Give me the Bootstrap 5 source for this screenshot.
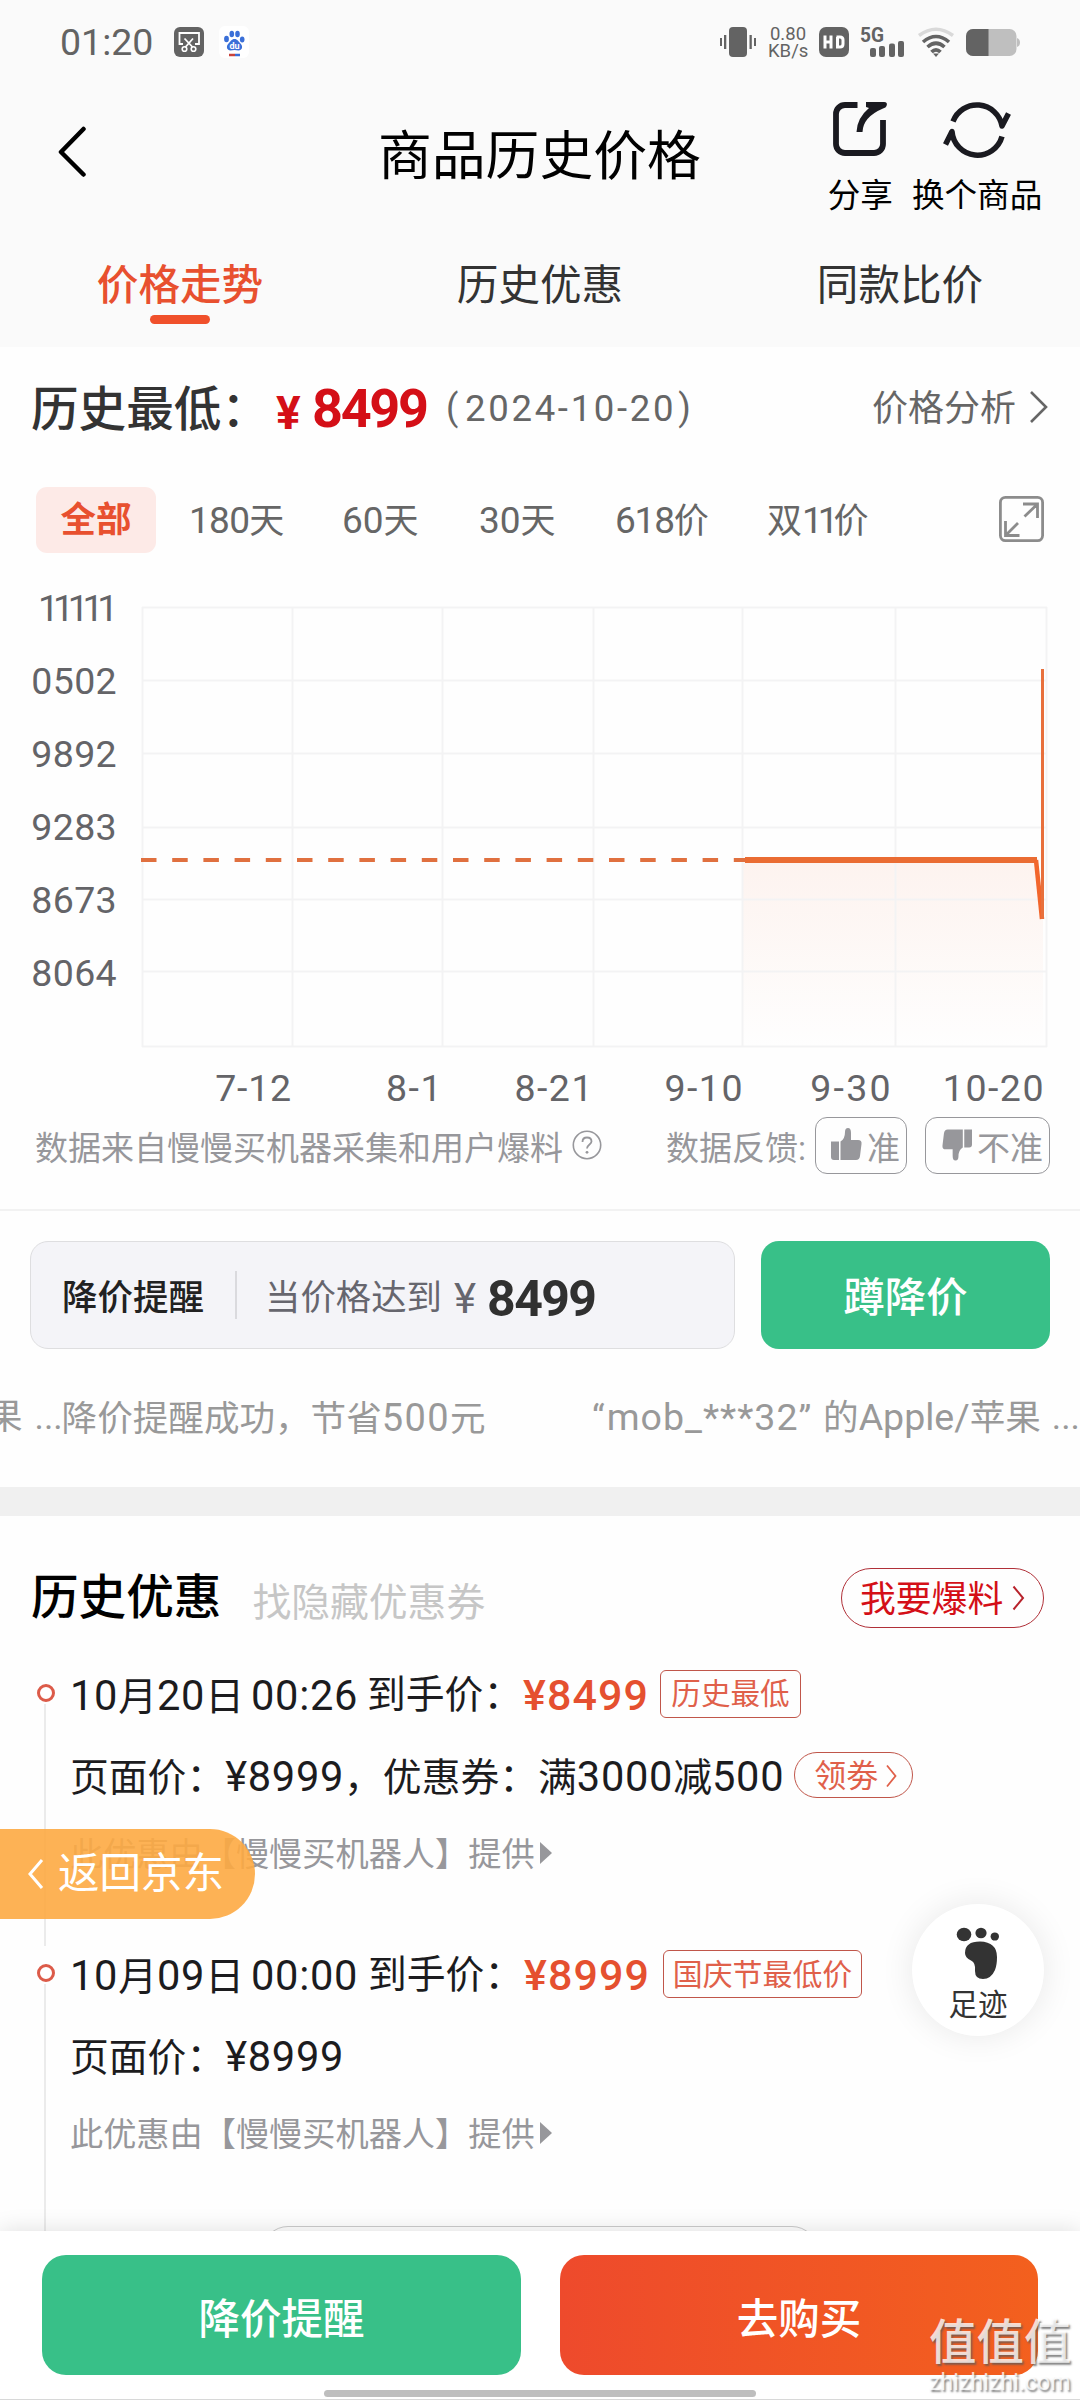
<!DOCTYPE html>
<html lang="zh-CN">
<head>
<meta charset="utf-8">
<meta name="viewport" content="width=device-width, initial-scale=1">
<title>商品历史价格</title>
<link href="https://cdn.jsdelivr.net/npm/bootstrap@5.3.0/dist/css/bootstrap.min.css" rel="stylesheet">
<style>
  body{font-family:Roboto,"Noto Sans CJK SC",sans-serif;background:#fefefe;color:#1c1c1e;line-height:1}
  .screen{width:1080px;height:2400px}
  .screen svg{display:block;flex:none}
  .screen span{white-space:nowrap}
  a{white-space:nowrap;text-decoration:none;color:inherit}
  .top-area{background:#fafafa;height:347px}
  .status{height:84px;padding:0 60px 0 60px;color:#636363}
  .clock{font-size:37.5px;padding-top:2px}
  .rate{font-size:18.5px;line-height:17.5px;width:40px;padding-top:2px}
  .head-row{height:144px}
  .head-title{font-size:53.8px;color:#000}
  .act-label{font-size:32.6px;color:#000;margin-top:22px}
  .tabs-row{height:119px;font-size:41.6px;color:#333}
  .tabs-row .tab-cell{width:360px;padding-top:37px}
  .tab-on{color:#e8502f;font-weight:500}
  .tab-bar{width:60px;height:9px;border-radius:5px;background:#f0502b;margin-top:8px}
  .low-row{height:121px;padding:3px 31px 0}
  .low-label{font-size:47.6px;font-weight:500;color:#333;padding-top:3px}
  .red{color:#d40f17}
  .grey{color:#666}
  .filters{height:104px;padding:0 36px;font-size:35px}
  .filters .num{font-size:37px}
  .tight{letter-spacing:-5px}
  .chip-on{width:120px;height:66px;padding-top:2px;border-radius:11px;background:#fdeae7;color:#e8502f;font-weight:700;font-size:35.5px}
  .src-row{height:66px;padding:0 30px 0 35px;font-size:33px;color:#97979b}
  .src-row .nudge{padding-top:6px}
  .vote{height:57px;border:1.5px solid #97979b;border-radius:12px}
  .rule{height:2px;background:#f2f2f2;margin-top:31px}
  .remind{padding:30px 30px 0}
  .remind-box{width:705px;height:108px;border:1.5px solid #dedee0;border-radius:18px;background:#f4f4f8;font-size:35.5px}
  .remind-box .nudge{padding-top:7px}
  .squat{width:289px;height:108px;padding-top:7px;border-radius:18px;background:#38c088;color:#fff;font-size:41.3px;font-weight:500}
  .marquee-row{height:138px;font-size:35.6px;color:#999;overflow:hidden}
  .band{height:29px;background:#f0f0f0}
  .hist-head{height:138px;padding:25px 36px 0 31px}
  .deal{height:280px;padding-left:70px;font-size:38.8px}
  .deal .num{font-size:41.6px;letter-spacing:.7px}
  .deal .hot{color:#e5502f;font-weight:500;font-size:43px;letter-spacing:1.1px}
  .deal .r1,.deal .r2,.deal .r3{padding-top:3px}
  .deal .r1{height:80px}.deal .r2{height:82px}.deal .r3{height:74px;font-size:33.2px;color:#97979b}
  .tagbox{border:1.5px solid #c0564a;border-radius:6px;height:48px;padding-top:2px;margin-top:-4px;color:#e0604a}
  .pill{border:1.5px solid #b03038;border-radius:40px;padding-top:6px}
  .track{left:0;top:1654px}
  .back-jd{left:0;top:1829px;width:255px;height:90px;border-radius:0 45px 45px 0;background:rgba(253,170,66,.9);font-size:41.5px}
  .foot-btn{left:912px;top:1904px;width:132px;height:132px;border-radius:50%;background:#fff;box-shadow:0 0 34px rgba(0,0,0,.09);font-size:29.5px;color:#333}
  .peek{left:262px;top:2226px;width:556px;height:60px;border:1.5px solid #ccc;border-radius:26px}
  .dock{left:0;top:2231px;width:1080px;height:169px;background:#fff;box-shadow:0 0 22px rgba(0,0,0,.13);padding:24px 42px 0;border-bottom:1px solid #d8d8d8}
  .dock .cta{height:120px;padding-top:9px;border-radius:24px;font-size:41.5px;font-weight:500}
  .cta-green{width:479px;background:#38c088}
  .cta-red{width:478px;background:linear-gradient(90deg,#ee4a2c,#f3601e)}
  .home-bar{left:324px;top:2390px;width:432px;height:7px;border-radius:4px;background:#bebebe}
  .wmark{left:929px;top:2320px;color:rgba(255,255,255,.78);text-shadow:1.5px 1.5px 2px rgba(90,90,90,.75)}
  .wmark .wm-a{font-size:47.5px;font-weight:500}
  .wmark .wm-b{font-size:23px;letter-spacing:.1px;margin-top:3px}
</style>
</head>
<body>
<div class="screen position-relative overflow-hidden">

  <header class="top-area">
    <div class="status d-flex align-items-center">
      <span class="clock">01:20</span>
      <svg style="margin-left:21px" width="30" height="30" viewBox="0 0 30 30"><rect width="30" height="30" rx="6" fill="#636363"/><path d="M9 17H5.500V6H25V17H21" fill="none" stroke="#fff" stroke-width="1.800"/><path d="M10.500 11.500 18.500 20M19 11.500 11.500 20" stroke="#fff" stroke-width="1.800"/><circle cx="10.500" cy="22" r="2.300" fill="none" stroke="#fff" stroke-width="1.600"/><circle cx="19.500" cy="22" r="2.300" fill="none" stroke="#fff" stroke-width="1.600"/></svg>
      <svg style="margin-left:15px" width="30" height="32" viewBox="0 0 30 32"><rect width="30" height="32" rx="6" fill="#fff"/><g fill="#3a6fd8"><ellipse cx="7.500" cy="13" rx="2.400" ry="3.200"/><ellipse cx="12.800" cy="8" rx="2.300" ry="3.200"/><ellipse cx="18.500" cy="8" rx="2.300" ry="3.200"/><ellipse cx="23.200" cy="13.500" rx="2.300" ry="3"/><path d="M15.500 13c3 0 4 2.500 6 4.500 3 3 1.500 7-2 7-1.500 0-2.500-.4-4-.4s-2.500.4-4 .4c-3.500 0-5-4-2-7 2-2 3-4.500 6-4.500z"/></g><text x="10.500" y="22.500" font-size="9" font-weight="700" fill="#fff">du</text><path d="M10 29h6" stroke="#c8423c" stroke-width="2.500"/><path d="M16 29h5" stroke="#3a6fd8" stroke-width="2.500"/></svg>
      <svg class="ms-auto" width="36" height="30" viewBox="0 0 36 30" fill="#636363"><rect x="9" width="18" height="30" rx="4"/><path d="M0 11h2v8H0zM4 8h2.300v14H4zM29.500 8h2.300v14h-2.300zM34 11h2v8h-2z"/></svg>
      <span class="rate text-center" style="margin-left:12px">0.80<br>KB/s</span>
      <svg style="margin-left:11px" width="30" height="30" viewBox="0 0 30 30"><rect width="30" height="30" rx="7" fill="#636363"/><path d="M6 8.500V21.500M12 8.500V21.500M6 15H12M17.500 10H21Q24 10 24 13V17Q24 20 21 20H18.500V10" fill="none" stroke="#fff" stroke-width="3"/></svg>
      <svg style="margin-left:11px" width="46" height="32" viewBox="0 0 46 32" fill="#636363"><text x="0" y="16" font-size="20" font-weight="700" textLength="24" lengthAdjust="spacingAndGlyphs">5G</text><rect x="10" y="22" width="6" height="9" rx="2"/><rect x="19" y="20" width="6" height="11" rx="2"/><rect x="29" y="17.500" width="6" height="13.500" rx="2"/><rect x="38" y="15" width="6" height="16" rx="2"/></svg>
      <svg style="margin-left:11px" width="38" height="31" viewBox="0 0 38 31" fill="none" stroke-width="3.600"><path d="M2 8.500Q19-4 36 8.500" stroke="#d9d9d9"/><path d="M6 15Q19 4 32 15M10.500 20Q19 12.500 27.500 20M14.500 25Q19 20.500 23.500 25" stroke="#636363"/><path d="M16 26.500h6L19 30z" fill="#636363" stroke="none"/></svg>
      <svg style="margin-left:11px" width="54" height="27" viewBox="0 0 54 27"><rect width="50.500" height="27" rx="7" fill="#bfbfbf"/><path d="M7 0H22.500V27H7A7 7 0 0 1 0 20V7A7 7 0 0 1 7 0z" fill="#636363"/><path d="M51 9q3 1 3 4.500T51 18z" fill="#bfbfbf"/></svg>
    </div>

    <div class="head-row d-flex">
      <svg style="margin:42px 0 0 57px" width="30" height="52" viewBox="0 0 30 52"><path d="M26.500 3 4 26 26.500 48.500" fill="none" stroke="#000" stroke-width="4.500" stroke-linecap="round" stroke-linejoin="round"/></svg>
      <span class="head-title" style="margin:46px 0 0 291px">商品历史价格</span>
      <div class="d-flex flex-column align-items-center" style="margin:16px 0 0 127px">
        <svg width="58" height="58" viewBox="0 0 58 58"><path d="M26.500 5H14A9 9 0 0 0 5 14V44A9 9 0 0 0 14 53H43A9 9 0 0 0 52 44V20" fill="none" stroke="#1a1a20" stroke-width="5.800"/><path d="M35 2H53Q57 2 55.500 6 55 7.500 52 8.500 32 17 31.500 32H25.500Q26 18 38 8L35 7Z" fill="#1a1a20"/></svg>
        <a href="#" class="act-label">分享</a>
      </div>
      <div class="d-flex flex-column align-items-center" style="margin:16px 0 0 19px">
        <svg width="70" height="58" viewBox="0 0 70 58" fill="none" stroke="#1a1a20" stroke-width="5.500" stroke-linejoin="round"><path d="M11 21.500A25.500 25.500 0 0 1 60 26L66.500 13.500"/><path d="M60 36.500A25.500 25.500 0 0 1 10 31.500L3.500 44.500"/></svg>
        <a href="#" class="act-label">换个商品</a>
      </div>
    </div>

    <nav class="tabs-row d-flex">
      <div class="tab-cell d-flex flex-column align-items-center tab-on"><span>价格走势</span><div class="tab-bar"></div></div>
      <div class="tab-cell text-center"><span>历史优惠</span></div>
      <div class="tab-cell text-center"><span>同款比价</span></div>
    </nav>
  </header>

  <section>
    <div class="low-row d-flex align-items-center">
      <span class="low-label" style="width:245px">历史最低：</span>
      <span class="red fw-bold" style="font-size:46px;width:36px;padding-top:7px">¥</span>
      <span class="red fw-bold" style="font-size:54px;letter-spacing:-2.300px;width:134px">8499</span>
      <span class="grey" style="font-size:36px;width:19px;padding-bottom:2px">(</span>
      <span class="grey" style="font-size:36.500px;letter-spacing:2.700px">2024-10-20</span>
      <span class="grey" style="font-size:36px;padding-bottom:2px;margin-left:2px">)</span>
      <span class="grey ms-auto" style="font-size:36px">价格分析</span>
      <svg style="margin:-4px 0 0 13px" width="20" height="34" viewBox="0 0 20 34"><path d="M2 2 17 17 2 32" fill="none" stroke="#666" stroke-width="2.600"/></svg>
    </div>

    <div class="filters d-flex align-items-center grey">
      <span class="chip-on d-flex align-items-center justify-content-center">全部</span>
      <span style="margin-left:33px;width:153px"><span class="num" style="letter-spacing:-.7px">180</span>天</span>
      <span style="width:137px"><span class="num">60</span>天</span>
      <span style="width:136px"><span class="num">30</span>天</span>
      <span style="width:152px"><span class="num" style="letter-spacing:-1.200px">618</span>价</span>
      <span>双<span class="num tight">11</span>价</span>
      <svg class="ms-auto" style="margin-top:-3px" width="45" height="46" viewBox="0 0 45 46" fill="none" stroke="#8c8c8c" stroke-width="2.800"><rect x="1.400" y="1.400" width="42.200" height="43.200" rx="5"/><path d="M24 8H38.500V22M38 8.500 25.500 20.500M6.500 25V39.500H20.500M7 39 19 27"/></svg>
    </div>

    <svg width="1080" height="540" viewBox="0 572 1080 540">
      <defs><linearGradient id="fade" x1="0" y1="0" x2="0" y2="1"><stop offset="0" stop-color="#fdf3ef"/><stop offset="1" stop-color="#fefefe"/></linearGradient></defs>
      <path d="M743 860H1036L1043 919V1046H743z" fill="url(#fade)"/>
      <path d="M142 607.500H1047M142 680.500H1047M142 753.500H1047M142 827.500H1047M142 899.500H1047M142 971.500H1047M142 1046.500H1047M142.500 607V1047M292.500 607V1047M442.500 607V1047M593.500 607V1047M742.500 607V1047M895.500 607V1047M1046.500 607V1047" stroke="#f3f3f4" stroke-width="2" fill="none"/>
      <path d="M141 860H745" stroke="#e0703f" stroke-width="4" stroke-dasharray="15.500 15.700"/>
      <path d="M745 860H1037" stroke="#ea6c33" stroke-width="6"/>
      <path d="M1036 860 1042 919" stroke="#f2662c" stroke-width="4.500"/>
      <path d="M1042.500 919V669" stroke="#e8703c" stroke-width="3"/>
      <g font-size="37.500" fill="#646468" text-anchor="end" letter-spacing=".35">
        <text x="112" y="620.500" letter-spacing="-6.300">11111</text><text x="117" y="693.500">0502</text><text x="117" y="766.500">9892</text><text x="117" y="839.500">9283</text><text x="117" y="912.500">8673</text><text x="117" y="985.500">8064</text>
        <text x="292" y="1101" letter-spacing=".8">7-12</text><text x="443" y="1101" letter-spacing="1.500">8-1</text><text x="594" y="1101" letter-spacing="1.500">8-21</text><text x="744" y="1101" letter-spacing="1.500">9-10</text><text x="893" y="1101" letter-spacing="2.300">9-30</text><text x="1045" y="1101" letter-spacing="1.500">10-20</text>
      </g>
    </svg>

    <div class="src-row d-flex align-items-center">
      <span class="nudge">数据来自慢慢买机器采集和用户爆料</span>
      <svg style="margin-left:9px" width="30" height="30" viewBox="0 0 30 30"><circle cx="15" cy="15" r="13.700" fill="none" stroke="#97979b" stroke-width="1.600"/><path d="M10.500 12Q10.500 7.500 15 7.500T19.500 11.500C19.500 14.500 15 14.500 15 18.500" fill="none" stroke="#97979b" stroke-width="1.800"/><circle cx="15" cy="22.300" r="1.400" fill="#97979b"/></svg>
      <span class="ms-auto nudge">数据反馈:</span>
      <span class="vote d-flex align-items-center" style="margin-left:9px;width:92px;padding-left:15px"><svg width="31" height="34" viewBox="0 0 31 34" fill="#97979b"><path d="M0 13.500h8V32H3Q0 32 0 29zM9.500 13.500Q14 11 14 4 14 0 17 0T20 5V12H27Q31 12 30.500 16L29 28Q28.500 32 25 32H9.500z"/></svg><span class="nudge" style="margin-left:5px">准</span></span>
      <span class="vote d-flex align-items-center" style="margin-left:18px;width:125px;padding-left:16px"><svg width="30" height="34" viewBox="0 0 31 34" fill="#97979b"><path d="M31 1H23V19.500H28Q31 19.500 31 16.500zM21.500 19.500Q17 22 17 29 17 33 14 33T11 28V21.500H4Q0 21.500 .5 17.500L2 5Q2.500 1 6 1H21.500z"/></svg><span class="nudge" style="margin-left:5px">不准</span></span>
    </div>
    <div class="rule"></div>

    <div class="remind d-flex justify-content-between">
      <div class="remind-box d-flex align-items-center">
        <span class="nudge" style="margin-left:31px;font-weight:500;color:#222">降价提醒</span>
        <span style="width:2px;height:48px;background:#dadade;margin:0 28px 0 31px"></span>
        <span class="nudge" style="color:#66666e;font-size:35.400px">当价格达到</span>
        <span class="nudge" style="color:#66666e;font-size:42px;margin-left:12px">¥</span>
        <span class="nudge" style="font-size:50px;font-weight:700;color:#303030;letter-spacing:-1.600px;margin-left:11px">8499</span>
      </div>
      <a href="#" class="squat d-flex align-items-center justify-content-center">蹲降价</a>
    </div>
    <div class="marquee-row d-flex align-items-center">
      <span style="margin-left:-13px">果</span><span style="margin-left:12px;width:27px">...</span><span style="width:516px">降价提醒成功，节省<span style="font-size:38px;letter-spacing:1.400px">500</span>元</span>
      <span style="width:286px;padding-left:42px"><span>“</span><span style="font-size:37.500px;letter-spacing:1px;margin-left:2px">mob_***32</span>”</span><span>的<span style="font-size:37.500px">Apple/</span>苹果</span><span style="margin-left:11px">...</span>
    </div>
  </section>

  <div class="band"></div>

  <section>
    <div class="hist-head d-flex align-items-center">
      <span style="font-size:47.600px;font-weight:500;color:#000;padding-top:3px">历史优惠</span>
      <span style="font-size:38.800px;color:#c6c6c6;margin:12px 0 0 31px">找隐藏优惠券</span>
      <a href="#" class="pill red ms-auto d-flex align-items-center" style="width:203px;height:60px;padding-left:18px;font-size:35.800px">我要爆料<svg style="margin:-6px 0 0 9px" width="13" height="26" viewBox="0 0 13 26"><path d="M1.500 1.500 11 13 1.500 24.500" fill="none" stroke="#b8232c" stroke-width="2"/></svg></a>
    </div>

    <article class="deal">
      <div class="r1 d-flex align-items-center">
        <span style="width:181px"><span class="num">10</span>月<span class="num">20</span>日</span><span class="num" style="width:116px">00:26</span><span style="width:156px">到手价：</span>
        <span class="hot" style="width:137px">¥8499</span>
        <span class="tagbox d-flex align-items-center justify-content-center" style="width:141px;font-size:29.600px">历史最低</span>
      </div>
      <div class="r2 d-flex align-items-center">
        <span>页面价：<span class="num">¥8999</span>，优惠券：满<span class="num">3000</span>减<span class="num">500</span></span>
        <a href="#" class="tagbox rounded-pill d-flex align-items-center" style="width:119px;height:46px;margin-left:10px;padding-left:19px;font-size:32px">领劵<svg style="margin-left:8px" width="11" height="24" viewBox="0 0 11 24"><path d="M1 1.500 9.500 12 1 22.500" fill="none" stroke="#e0604a" stroke-width="1.800"/></svg></a>
      </div>
      <div class="r3 d-flex align-items-center"><span>此优惠由【慢慢买机器人】提供</span><svg style="margin:-3px 0 0 5px" width="12" height="22" viewBox="0 0 12 22"><path d="M0 0 12 11 0 22z" fill="#97979b"/></svg></div>
    </article>

    <article class="deal">
      <div class="r1 d-flex align-items-center">
        <span style="width:181px"><span class="num">10</span>月<span class="num">09</span>日</span><span class="num" style="width:117px">00:00</span><span style="width:156px">到手价：</span>
        <span class="hot" style="width:139px">¥8999</span>
        <span class="tagbox d-flex align-items-center justify-content-center" style="width:199px;font-size:29.900px">国庆节最低价</span>
      </div>
      <div class="r2 d-flex align-items-center"><span>页面价：<span class="num">¥8999</span></span></div>
      <div class="r3 d-flex align-items-center"><span>此优惠由【慢慢买机器人】提供</span><svg style="margin:-3px 0 0 5px" width="12" height="22" viewBox="0 0 12 22"><path d="M0 0 12 11 0 22z" fill="#97979b"/></svg></div>
    </article>
  </section>

  <svg class="track position-absolute" width="70" height="577" viewBox="0 1654 70 577"><path d="M45 1704V1946M45 1984V2231" stroke="#ebebeb" stroke-width="2"/><circle cx="46" cy="1693" r="7.500" fill="#fff" stroke="#dc5b49" stroke-width="3"/><circle cx="46" cy="1973" r="7.500" fill="#fff" stroke="#dc5b49" stroke-width="3"/></svg>

  <a href="#" class="back-jd position-absolute d-flex align-items-center text-white"><svg style="margin-left:27px" width="17" height="32" viewBox="0 0 17 32"><path d="M15 2 3 16 15 30" fill="none" stroke="#fff" stroke-width="3"/></svg><span style="margin-left:14px">返回京东</span></a>

  <a href="#" class="foot-btn position-absolute d-flex flex-column align-items-center"><svg style="margin-top:23px" width="44" height="54" viewBox="956 1927 44 54" fill="#333"><ellipse cx="964" cy="1934.500" rx="7.300" ry="6.800"/><ellipse cx="981" cy="1933" rx="5.600" ry="5.300"/><ellipse cx="994.800" cy="1936.500" rx="4.200" ry="4.100"/><path d="M965 1953Q965 1941.500 980 1941.500 997 1942 997 1957 997 1965 995 1970 991 1979 983 1979 975 1979 975 1971 976 1963 971 1960.500 965 1957.500 965 1953z"/></svg><span style="margin-top:10px">足迹</span></a>

  <div class="peek position-absolute"></div>
  <footer class="dock position-absolute d-flex justify-content-between align-items-start">
    <a href="#" class="cta cta-green d-flex align-items-center justify-content-center text-white">降价提醒</a>
    <a href="#" class="cta cta-red d-flex align-items-center justify-content-center text-white">去购买</a>
  </footer>
  <div class="home-bar position-absolute"></div>
  <div class="wmark position-absolute d-flex flex-column"><span class="wm-a">值值值</span><span class="wm-b">zhizhizhi.com</span></div>
</div>
<script src="https://cdn.jsdelivr.net/npm/bootstrap@5.3.0/dist/js/bootstrap.bundle.min.js"></script>
</body>
</html>
